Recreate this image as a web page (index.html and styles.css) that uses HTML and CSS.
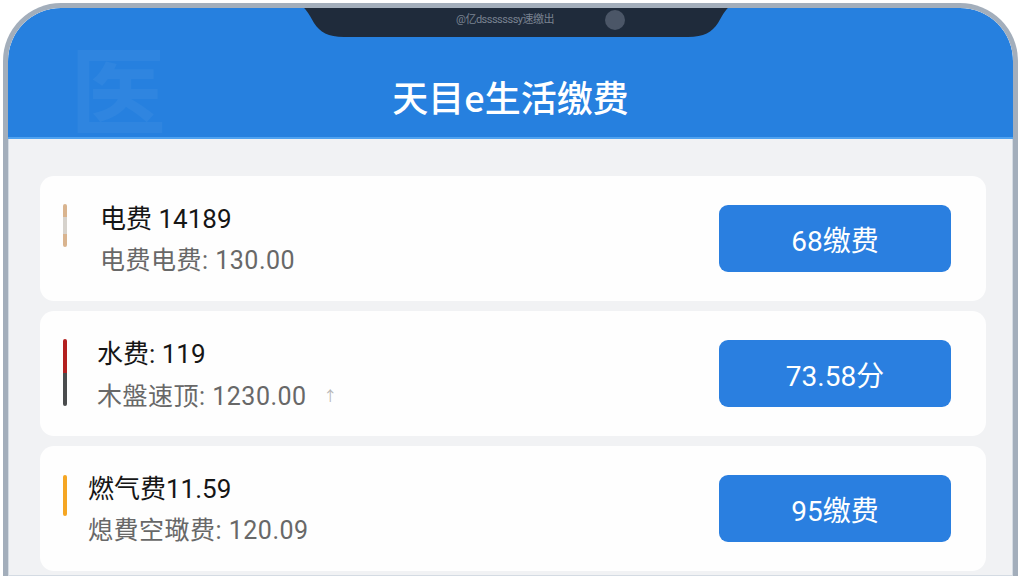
FILE: index.html
```html
<!DOCTYPE html>
<html lang="zh-CN">
<head>
<meta charset="utf-8">
<title>天目e生活缴费</title>
<link rel="stylesheet" href="styles.css">
</head>
<body>
<div class="phone">
  <div class="screen">
    <header class="header">
      <span class="watermark">医</span>
      <h1 class="title">天目e生活缴费</h1>
      <div class="notch">
        <svg class="notch-shape" width="472" height="38" viewBox="0 0 472 38">
          <path d="M0 0 H472 C454 0 448 6 442 16 L438 23 C432 32 424 37 408 37 H64 C48 37 40 32 34 23 L30 16 C24 6 18 0 0 0 Z" fill="#1f2b3b"/>
        </svg>
        <span class="notch-text">@亿dsssssssy速缴出</span>
        <span class="camera"></span>
      </div>
    </header>
    <main class="list">
      <section class="card">
        <span class="bar bar-elec"></span>
        <div class="info info-wide">
          <div class="name">电费 14189</div>
          <div class="detail">电费电费: 130.00</div>
        </div>
        <button class="pay">68缴费</button>
      </section>
      <section class="card">
        <span class="bar bar-water"></span>
        <div class="info info-mid">
          <div class="name">水费: 119</div>
          <div class="detail">木盤速顶: 1230.00 <span class="arrow">↑</span></div>
        </div>
        <button class="pay">73.58分</button>
      </section>
      <section class="card">
        <span class="bar bar-gas"></span>
        <div class="info info-narrow">
          <div class="name">燃气费11.59</div>
          <div class="detail">熄費空璥费: 120.09</div>
        </div>
        <button class="pay">95缴费</button>
      </section>
    </main>
  </div>
</div>
</body>
</html>
```
FILE: styles.css
```css
* { box-sizing: border-box; }
html, body { margin: 0; padding: 0; }
body {
  background: #ffffff;
  width: 1024px;
  height: 576px;
  overflow: hidden;
  font-family: "Roboto", "Noto Sans CJK SC", sans-serif;
}
.phone {
  margin: 3px 6px 0 3px;
  height: 573px;
  border: 5px solid #a3aebb;
  border-bottom: none;
  border-radius: 58px 58px 0 0;
  overflow: hidden;
  background: #f1f2f4;
}
.screen {
  height: 100%;
  border-radius: 53px 53px 0 0;
  overflow: hidden;
  box-shadow: inset 0 0 0 1px #d4dbe3;
}
.header {
  position: relative;
  height: 131px;
  background: #2680df;
  border-bottom: 2px solid #4fa2f0;
  padding-top: 65px;
  text-align: center;
}
.watermark {
  position: absolute;
  left: 62px;
  top: 30px;
  font-family: "Noto Sans CJK SC", sans-serif;
  font-size: 96px;
  font-weight: 700;
  line-height: 1;
  color: rgba(255, 255, 255, 0.045);
}
.title {
  margin: 0;
  font-family: "Noto Sans CJK SC", sans-serif;
  font-size: 36px;
  font-weight: 500;
  line-height: 46px;
  letter-spacing: 0;
  color: #ffffff;
}
.notch {
  position: absolute;
  left: 272px;
  top: -8px;
  width: 472px;
  height: 38px;
}
.notch-shape { display: block; }
.notch-text {
  position: absolute;
  left: 176px;
  top: 14px;
  font-size: 11px;
  line-height: 12px;
  color: #8f99a6;
  letter-spacing: -0.5px;
  opacity: 0.8;
}
.camera {
  position: absolute;
  left: 325px;
  top: 10px;
  width: 20px;
  height: 20px;
  border-radius: 50%;
  background: #4b5667;
}
.list {
  padding: 37px 27px 0 32px;
  display: flex;
  flex-direction: column;
  gap: 10px;
}
.card {
  height: 125px;
  flex: none;
  background: #fefefe;
  border-radius: 14px;
  display: flex;
  align-items: flex-start;
  padding: 28px 35px 0 23px;
}
.bar {
  width: 4px;
  border-radius: 2px;
  flex: none;
}
.bar-elec {
  height: 43px;
  background: linear-gradient(#d9b48f 0 30%, #d6d2cc 30% 70%, #d9b48f 70%);
}
.bar-water {
  height: 67px;
  background: linear-gradient(#b3201f 0 50%, #4a4c4d 50%);
}
.bar-gas {
  height: 41px;
  margin-top: 1px;
  background: #f5a623;
}
.info { flex: 1; }
.info-wide { margin-left: 33px; }
.info-mid { margin-left: 30px; }
.info-narrow { margin-left: 21px; }
.name {
  font-size: 26px;
  line-height: 30px;
  color: #161616;
}
.detail {
  margin-top: 12px;
  font-size: 25px;
  line-height: 30px;
  letter-spacing: 0.5px;
  color: #686868;
}
.arrow {
  font-size: 14px;
  color: #b5b5b5;
  margin-left: 10px;
  vertical-align: 4px;
}
.pay {
  align-self: center;
  margin-top: -28px;
  width: 232px;
  height: 67px;
  border: none;
  border-radius: 9px;
  background: #2a7fe0;
  color: #ffffff;
  font-family: "Roboto", "Noto Sans CJK SC", sans-serif;
  font-size: 28px;
  padding: 0;
}
```
